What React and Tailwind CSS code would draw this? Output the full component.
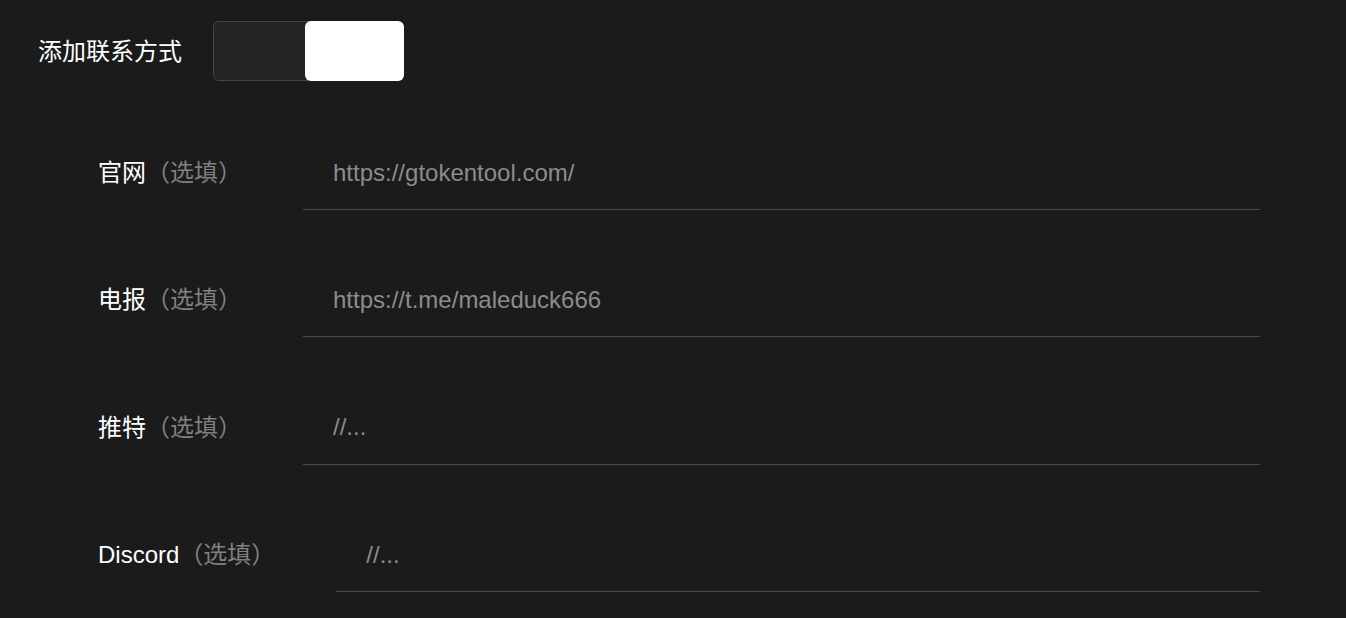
import React from 'react';

const rows = [
  { label: '官网', value: 'https://gtokentool.com/' },
  { label: '电报', value: 'https://t.me/maleduck666' },
  { label: '推特', value: '', placeholder: '//...' },
  { label: 'Discord', value: '', placeholder: '//...' },
];

function ContactRow({ label, value, placeholder }) {
  return (
    <div className="flex items-center">
      <div className="shrink-0 whitespace-nowrap text-[24px] leading-none">
        <span className="text-white">{label}</span>
        <span className="text-[#808080]">（选填）</span>
      </div>
      <div className="ml-[61px] flex h-[74px] flex-1 items-center border-b border-[#4a4a4a] pl-[30px]">
        <input
          className="w-full bg-transparent text-[24px] text-[#8c8c8c] outline-none placeholder:text-[#8c8c8c]"
          defaultValue={value}
          placeholder={placeholder}
        />
      </div>
    </div>
  );
}

export default function App() {
  return (
    <div
      className="min-h-screen w-full bg-[#1b1b1b] pl-[38px] pt-[21px]"
      style={{ fontFamily: '"Liberation Sans", "Noto Sans CJK SC", sans-serif' }}
    >
      <div className="flex items-center">
        <span className="pt-px text-[24px] leading-none text-white">添加联系方式</span>
        <div className="ml-[31px] flex h-[60px] w-[191px] justify-end rounded-[6px] border border-[#454545] bg-[#242424]">
          <div className="-m-px h-[60px] w-[99px] rounded-[6px] bg-white" />
        </div>
      </div>

      <div className="mt-[55px] flex w-[1222px] flex-col gap-[53.4px] pl-[60px]">
        {rows.map((r) => (
          <ContactRow key={r.label} {...r} />
        ))}
      </div>
    </div>
  );
}
